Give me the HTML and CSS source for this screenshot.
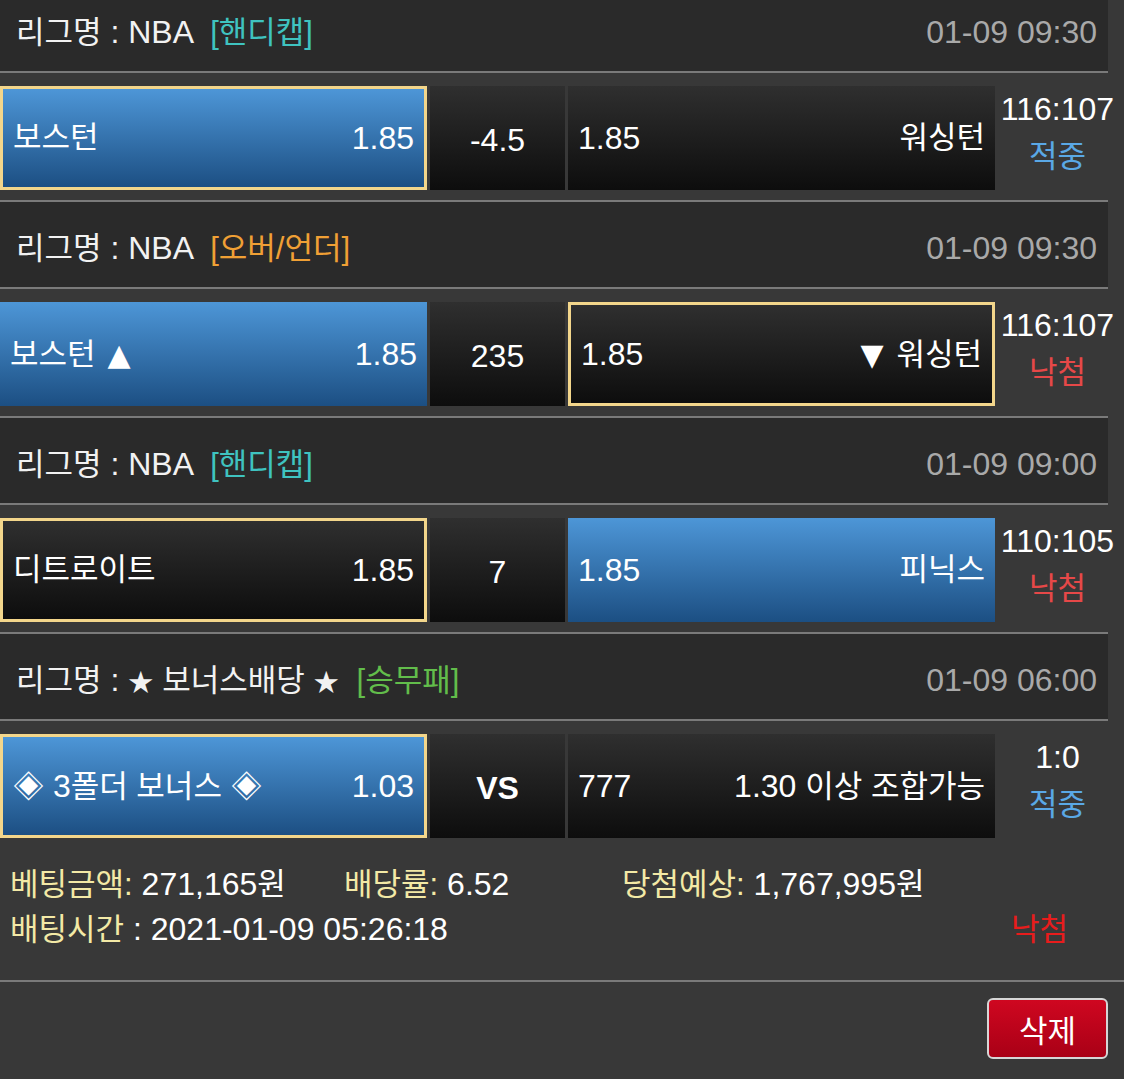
FILE: index.html
```html
<!DOCTYPE html>
<html lang="ko">
<head>
  <meta charset="UTF-8" />
  <meta name="viewport" content="width=device-width, initial-scale=1" />
  <title>베팅내역</title>
  <link rel="stylesheet" href="styles.css">
</head>
<body>
  <div class="bet-list">

    <div class="game">
      <div class="game-head">
        <div class="league"><span class="ko">리그명</span> : NBA <span class="tag tag-handi ko">[핸디캡]</span></div>
        <div class="time">01-09 09:30</div>
      </div>
      <div class="game-row">
        <div class="pick home blue picked"><span class="ko">보스턴</span><span>1.85</span></div>
        <div class="pick mid">-4.5</div>
        <div class="pick away"><span>1.85</span><span class="ko">워싱턴</span></div>
        <div class="result"><div>116:107</div><div class="ko hit">적중</div></div>
      </div>
    </div>

    <div class="game">
      <div class="game-head">
        <div class="league"><span class="ko">리그명</span> : NBA <span class="tag tag-ou ko">[오버/언더]</span></div>
        <div class="time">01-09 09:30</div>
      </div>
      <div class="game-row">
        <div class="pick home blue"><span><span class="ko">보스턴</span> <span class="tri up">▲</span></span><span>1.85</span></div>
        <div class="pick mid">235</div>
        <div class="pick away picked"><span>1.85</span><span><span class="tri down">▼</span> <span class="ko">워싱턴</span></span></div>
        <div class="result"><div>116:107</div><div class="ko miss">낙첨</div></div>
      </div>
    </div>

    <div class="game">
      <div class="game-head">
        <div class="league"><span class="ko">리그명</span> : NBA <span class="tag tag-handi ko">[핸디캡]</span></div>
        <div class="time">01-09 09:00</div>
      </div>
      <div class="game-row">
        <div class="pick home picked"><span class="ko">디트로이트</span><span>1.85</span></div>
        <div class="pick mid">7</div>
        <div class="pick away blue"><span>1.85</span><span class="ko">피닉스</span></div>
        <div class="result"><div>110:105</div><div class="ko miss">낙첨</div></div>
      </div>
    </div>

    <div class="game">
      <div class="game-head">
        <div class="league"><span class="ko">리그명</span> : <span class="star">★</span> <span class="ko">보너스배당</span> <span class="star">★</span> <span class="tag tag-wdl ko">[승무패]</span></div>
        <div class="time">01-09 06:00</div>
      </div>
      <div class="game-row last">
        <div class="pick home blue picked"><span><span class="ko">◈</span> 3<span class="ko">폴더 보너스 ◈</span></span><span>1.03</span></div>
        <div class="pick mid vs">VS</div>
        <div class="pick away"><span>777</span><span>1.30 <span class="ko">이상 조합가능</span></span></div>
        <div class="result"><div>1:0</div><div class="ko hit">적중</div></div>
      </div>
    </div>

  </div>

  <div class="summary">
    <div class="summary-row">
      <div class="cell cell-amount"><span class="label ko">베팅금액:</span> 271,165<span class="ko">원</span></div>
      <div class="cell cell-rate"><span class="label ko">배당률:</span> 6.52</div>
      <div class="cell"><span class="label ko">당첨예상:</span> 1,767,995<span class="ko">원</span></div>
    </div>
    <div class="summary-row split">
      <div class="cell"><span class="label ko">배팅시간</span> : 2021-01-09 05:26:18</div>
      <div class="cell status ko">낙첨</div>
    </div>
  </div>

  <div class="actions">
    <button type="button" class="btn-delete ko">삭제</button>
  </div>
</body>
</html>
```

FILE: styles.css
```css
* {
  box-sizing: border-box;
}
body {
  margin: 0;
  background: #383838;
  color: #fff;
  font-family: "Liberation Sans", Arial, "Noto Sans CJK KR", sans-serif;
  font-size: 32px;
  line-height: 1.2;
  overflow: hidden;
}
.ko {
  font-family: "Liberation Sans", Arial, "Noto Sans CJK KR", sans-serif;
  font-size: 31px;
}
.tri {
  font-family: "DejaVu Sans", sans-serif;
  font-size: 30px;
}
.tri.up {
  margin-left: 3px;
}
.tri.down {
  margin-right: 4px;
}
.star {
  font-family: "Noto Sans CJK KR", sans-serif;
  font-size: 25px;
}
.bet-list {
  width: 1108px;
  margin-top: -14px;
}
.game-head {
  height: 87px;
  background: #2a2a2a;
  border-bottom: 2px solid #7a7a7a;
  display: flex;
  align-items: center;
  justify-content: space-between;
  padding: 7px 11px 0 16px;
}
.league {
  color: #f2f2f2;
}
.tag {
  margin-left: 9px;
}
.tag-handi {
  color: #3fc3c0;
}
.tag-ou {
  color: #f0a035;
}
.tag-wdl {
  color: #62bd4b;
}
.time {
  color: #a9a9a9;
}
.game-row {
  display: flex;
  align-items: flex-start;
  height: 129px;
  padding: 13px 0 10px;
  border-bottom: 2px solid #7a7a7a;
}
.game-row.last {
  height: 127px;
  border-bottom: none;
}
.pick {
  height: 104px;
  display: flex;
  align-items: center;
  justify-content: space-between;
  padding: 0 10px;
  background: linear-gradient(#2f2f2f, #0d0d0d);
  white-space: nowrap;
}
.pick.home,
.pick.away {
  width: 427px;
}
.pick.mid {
  width: 135px;
  margin: 0 3px;
  justify-content: center;
  padding-top: 4px;
}
.pick.vs {
  font-weight: bold;
}
.pick.blue {
  background: linear-gradient(#4d96d7, #1c4f83);
}
.pick.picked {
  border: 3px solid #f3d68b;
}
.result {
  width: 125px;
  margin-right: -12px;
  text-align: center;
  line-height: 46px;
}
.result .ko {
  padding-top: 2px;
}
.hit {
  color: #5aa8e6;
}
.miss {
  color: #e64848;
}
.summary {
  padding: 14px 56px 28px 10px;
  border-bottom: 2px solid #7a7a7a;
  line-height: 45px;
}
.summary-row {
  display: flex;
}
.summary-row.split {
  justify-content: space-between;
}
.cell-amount {
  width: 334px;
}
.cell-rate {
  width: 278px;
}
.label {
  color: #f3e9a6;
}
.status {
  color: #e81c1c;
}
.actions {
  display: flex;
  justify-content: flex-end;
  padding: 16px 16px 0 0;
}
.btn-delete {
  width: 121px;
  height: 61px;
  border: 2px solid #d6d6d6;
  border-radius: 6px;
  background: linear-gradient(#cf0720, #a90016);
  color: #fff;
  cursor: pointer;
}
```
